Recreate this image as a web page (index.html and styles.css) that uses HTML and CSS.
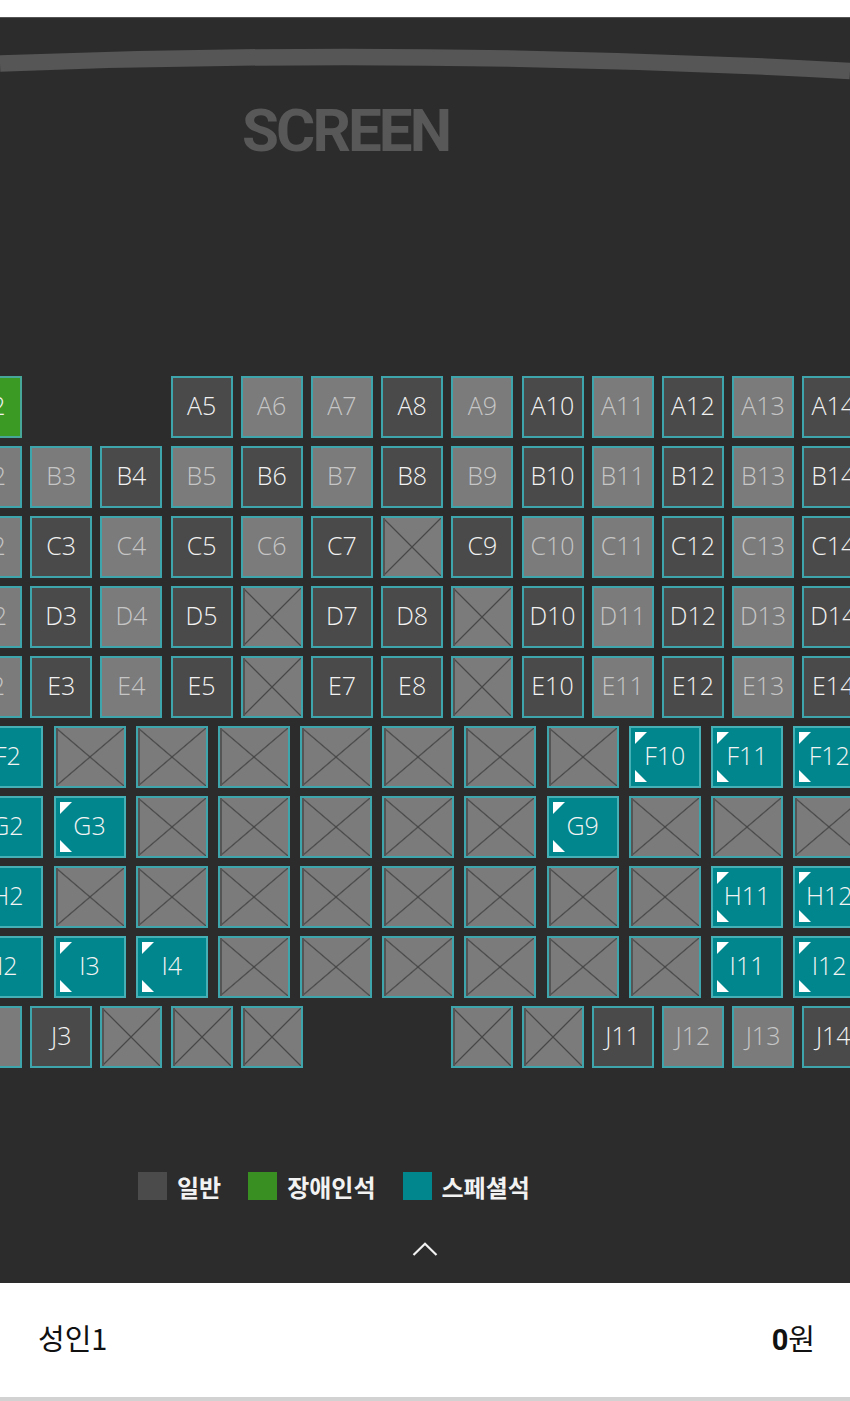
FILE: index.html
```html
<!DOCTYPE html>
<html lang="ko">
<head>
    <meta charset="UTF-8">
    <title>좌석 선택</title>
    <link rel="stylesheet" href="styles.css">
</head>

<body>
    <div class="top-gap"></div>

    <div class="theater">
        <svg class="screen-arc" width="850" height="40" viewBox="0 0 850 40">
            <path d="M0 18.5 Q425 2.3 850 26" fill="none" stroke="#565656" stroke-width="16.5"/>
        </svg>
        <div class="screen-label">SCREEN</div>

        <div class="seatmap">
            <div class="row narrow">
                <div class="seat g">A2</div>
                <div class="seat e"></div>
                <div class="seat e"></div>
                <div class="seat d">A5</div>
                <div class="seat l">A6</div>
                <div class="seat l">A7</div>
                <div class="seat d">A8</div>
                <div class="seat l">A9</div>
                <div class="seat d">A10</div>
                <div class="seat l">A11</div>
                <div class="seat d">A12</div>
                <div class="seat l">A13</div>
                <div class="seat d">A14</div>
            </div>
            <div class="row narrow">
                <div class="seat l">B2</div>
                <div class="seat l">B3</div>
                <div class="seat d">B4</div>
                <div class="seat l">B5</div>
                <div class="seat d">B6</div>
                <div class="seat l">B7</div>
                <div class="seat d">B8</div>
                <div class="seat l">B9</div>
                <div class="seat d">B10</div>
                <div class="seat l">B11</div>
                <div class="seat d">B12</div>
                <div class="seat l">B13</div>
                <div class="seat d">B14</div>
            </div>
            <div class="row narrow">
                <div class="seat l">C2</div>
                <div class="seat d">C3</div>
                <div class="seat l">C4</div>
                <div class="seat d">C5</div>
                <div class="seat l">C6</div>
                <div class="seat d">C7</div>
                <div class="seat x"></div>
                <div class="seat d">C9</div>
                <div class="seat l">C10</div>
                <div class="seat l">C11</div>
                <div class="seat d">C12</div>
                <div class="seat l">C13</div>
                <div class="seat d">C14</div>
            </div>
            <div class="row narrow">
                <div class="seat l">D2</div>
                <div class="seat d">D3</div>
                <div class="seat l">D4</div>
                <div class="seat d">D5</div>
                <div class="seat x"></div>
                <div class="seat d">D7</div>
                <div class="seat d">D8</div>
                <div class="seat x"></div>
                <div class="seat d">D10</div>
                <div class="seat l">D11</div>
                <div class="seat d">D12</div>
                <div class="seat l">D13</div>
                <div class="seat d">D14</div>
            </div>
            <div class="row narrow">
                <div class="seat l">E2</div>
                <div class="seat d">E3</div>
                <div class="seat l">E4</div>
                <div class="seat d">E5</div>
                <div class="seat x"></div>
                <div class="seat d">E7</div>
                <div class="seat d">E8</div>
                <div class="seat x"></div>
                <div class="seat d">E10</div>
                <div class="seat l">E11</div>
                <div class="seat d">E12</div>
                <div class="seat l">E13</div>
                <div class="seat d">E14</div>
            </div>

            <div class="row wide">
                <div class="seat p">F2</div>
                <div class="seat x"></div>
                <div class="seat x"></div>
                <div class="seat x"></div>
                <div class="seat x"></div>
                <div class="seat x"></div>
                <div class="seat x"></div>
                <div class="seat x"></div>
                <div class="seat p">F10</div>
                <div class="seat p">F11</div>
                <div class="seat p">F12</div>
            </div>
            <div class="row wide">
                <div class="seat p">G2</div>
                <div class="seat p">G3</div>
                <div class="seat x"></div>
                <div class="seat x"></div>
                <div class="seat x"></div>
                <div class="seat x"></div>
                <div class="seat x"></div>
                <div class="seat p">G9</div>
                <div class="seat x"></div>
                <div class="seat x"></div>
                <div class="seat x"></div>
            </div>
            <div class="row wide">
                <div class="seat p">H2</div>
                <div class="seat x"></div>
                <div class="seat x"></div>
                <div class="seat x"></div>
                <div class="seat x"></div>
                <div class="seat x"></div>
                <div class="seat x"></div>
                <div class="seat x"></div>
                <div class="seat x"></div>
                <div class="seat p">H11</div>
                <div class="seat p">H12</div>
            </div>
            <div class="row wide">
                <div class="seat p">I2</div>
                <div class="seat p">I3</div>
                <div class="seat p">I4</div>
                <div class="seat x"></div>
                <div class="seat x"></div>
                <div class="seat x"></div>
                <div class="seat x"></div>
                <div class="seat x"></div>
                <div class="seat x"></div>
                <div class="seat p">I11</div>
                <div class="seat p">I12</div>
            </div>

            <div class="row narrow">
                <div class="seat l">J2</div>
                <div class="seat d">J3</div>
                <div class="seat x"></div>
                <div class="seat x"></div>
                <div class="seat x"></div>
                <div class="seat e"></div>
                <div class="seat e"></div>
                <div class="seat x"></div>
                <div class="seat x"></div>
                <div class="seat d">J11</div>
                <div class="seat l">J12</div>
                <div class="seat l">J13</div>
                <div class="seat d">J14</div>
            </div>
        </div>

        <ul class="legend">
            <li><span class="chip chip-normal"></span>일반</li>
            <li><span class="chip chip-handi"></span>장애인석</li>
            <li><span class="chip chip-special"></span>스페셜석</li>
        </ul>

        <div class="toggle">
            <svg width="26" height="14" viewBox="0 0 26 14">
                <polyline points="1.5,13 13,1.8 24.5,13" fill="none" stroke="#f2f2f2" stroke-width="2.2"/>
            </svg>
        </div>
    </div>

    <div class="summary">
        <span class="who">성인1</span>
        <span class="price"><b>0</b>원</span>
    </div>
    <div class="bottom-bar"></div>
</body>
</html>
```

FILE: styles.css
```css
*
{
    box-sizing: border-box;
}
body
{
    margin: 0;
    width: 850px;
    background: #fff;
    font-family: "Open Sans", "Noto Sans", "Noto Sans CJK KR", sans-serif;
}
.top-gap
{
    height: 17px;
    background: #fff;
}
.theater
{
    height: 1266px;
    background: #2c2c2c;
    border-top: 1px solid #555;
    overflow: hidden;
    display: flex;
    flex-direction: column;
}
.screen-arc
{
    display: block;
    margin-top: 27px;
}
.screen-label
{
    margin-top: 15px;
    padding-left: 242px;
    font-family: Roboto, "Liberation Sans", sans-serif;
    font-weight: bold;
    font-size: 60px;
    line-height: 61px;
    letter-spacing: -2.9px;
    color: #585858;
}

/* seat map */
.seatmap
{
    margin-top: 215px;
    width: 850px;
    overflow: hidden;
    display: flex;
    flex-direction: column;
    gap: 8px;
}
.row
{
    display: flex;
}
.narrow
{
    margin-left: -40px;
    gap: 8.2px;
}
.wide
{
    margin-left: -28.7px;
    gap: 10.2px;
}
.seat
{
    flex-shrink: 0;
    width: 62px;
    height: 62px;
    border: 2px solid #3ea5ac;
    display: flex;
    align-items: center;
    justify-content: center;
    padding-bottom: 5px;
    font-weight: 300;
    font-size: 25px;
    color: #f2f2f2;
    position: relative;
}
.wide .seat
{
    width: 72px;
}
.seat.d
{
    background: #4a4a4a;
}
.seat.l
{
    background: #7b7b7b;
    color: #c6c6c6;
}
.seat.g
{
    background: #3a9a24;
    border-color: #47a89a;
}
.seat.e
{
    visibility: hidden;
}
.seat.x
{
    background:
        linear-gradient(to top right, transparent calc(50% - 1.2px), #474747 50%, transparent calc(50% + 1.2px)),
        linear-gradient(to bottom right, transparent calc(50% - 1.2px), #474747 50%, transparent calc(50% + 1.2px)),
        #7b7b7b;
    box-shadow: inset 2px 0 #555;
}
.seat.p
{
    background: #00868c;
    border-color: #45b1b6;
    color: #f4f4f4;
}
.seat.p::before,
.seat.p::after
{
    content: "";
    position: absolute;
    left: 4px;
    width: 0;
    height: 0;
    border-style: solid;
}
.seat.p::before
{
    top: 4px;
    border-width: 12px 12px 0 0;
    border-color: #fff transparent transparent transparent;
}
.seat.p::after
{
    bottom: 4px;
    border-width: 12px 0 0 12px;
    border-color: transparent transparent transparent #fff;
}

/* legend */
.legend
{
    list-style: none;
    margin: 104px 0 0 0;
    padding-left: 138px;
    display: flex;
    gap: 27px;
    height: 28px;
}
.legend li
{
    display: flex;
    align-items: center;
    gap: 10px;
    font-family: "Noto Sans CJK KR", sans-serif;
    font-weight: 700;
    font-size: 24px;
    color: #f2f2f2;
}
.chip
{
    display: inline-block;
    width: 29px;
    height: 28px;
}
.chip-normal
{
    background: #4b4b4b;
}
.chip-handi
{
    background: #3a8f23;
}
.chip-special
{
    background: #00868c;
}
.toggle
{
    margin-top: 42px;
    display: flex;
    justify-content: center;
}
.toggle svg
{
    display: block;
}

/* bottom summary */
.summary
{
    height: 114px;
    display: flex;
    align-items: center;
    justify-content: space-between;
    padding: 0 35px 6px 38px;
    font-family: "Noto Sans CJK KR", sans-serif;
    font-size: 29px;
    color: #111;
}
.price b
{
    font-family: Roboto, sans-serif;
    font-weight: bold;
}
.bottom-bar
{
    height: 4px;
    background: #d2d2d2;
}
```
